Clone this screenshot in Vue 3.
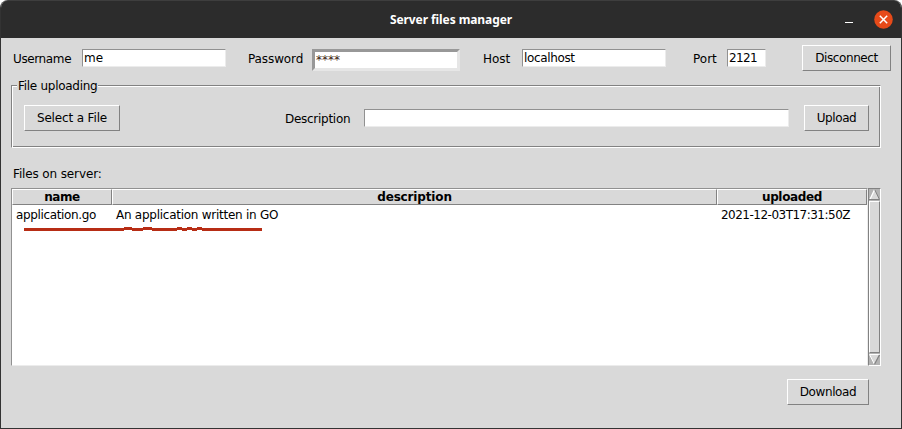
<script setup>
const columns = ['name', 'description', 'uploaded']
const rows = [
  { name: 'application.go', description: 'An application written in GO', uploaded: '2021-12-03T17:31:50Z' },
]
</script>

<template>
  <div class="window">
    <header class="titlebar">
      <span></span>
      <h1><span class="title">Server files manager</span></h1>
      <div class="controls">
        <span class="minimize"></span>
        <svg class="close" width="19" height="19" viewBox="0 0 19 19">
          <circle cx="9.5" cy="9.5" r="9.3" fill="#e64a19" />
          <path d="M5.8 5.8 L13.2 13.2 M13.2 5.8 L5.8 13.2" stroke="#fff" stroke-width="1.5" />
        </svg>
      </div>
    </header>

    <main class="content">
      <div class="connection">
        <label><span class="t-user">Username</span></label>
        <div class="entry"><span class="t-me">me</span></div>
        <label><span class="t-pass">Password</span></label>
        <div class="entry password"><span>****</span></div>
        <label><span class="t-host">Host</span></label>
        <div class="entry"><span class="t-local">localhost</span></div>
        <label><span class="t-port">Port</span></label>
        <div class="entry"><span class="t-num">2121</span></div>
        <div class="button"><span class="t-disc">Disconnect</span></div>
      </div>

      <section class="group">
        <div class="legend"><span class="t-legend">File uploading</span></div>
        <div class="upload">
          <div class="button"><span class="t-select">Select a File</span></div>
          <label><span class="t-desc">Description</span></label>
          <div class="entry"></div>
          <div class="button"><span class="t-upload">Upload</span></div>
        </div>
      </section>

      <div class="caption"><span class="t-files">Files on server:</span></div>

      <div class="listing">
        <div class="table">
          <div class="line head">
            <div v-for="c in columns" :key="c" class="th"><span :class="'h-' + c">{{ c }}</span></div>
          </div>
          <div v-for="r in rows" :key="r.name" class="line">
            <div v-for="c in columns" :key="c" class="td"><span :class="'d-' + c">{{ r[c] }}</span></div>
          </div>
          <svg class="marker" width="238" height="4" viewBox="0 0 238 4" shape-rendering="crispEdges">
            <path fill="#b72d15" d="M0 1H100V0H108V1H119V0H128V1H153V0H158V1H163V0H168V1H173V0H178V1H238V4H178V3H173V4H168V3H163V4H158V3H153V4H128V3H119V4H108V3H100V4H0Z" />
          </svg>
        </div>
        <div class="scrollbar">
          <svg width="11" height="12" viewBox="0 0 11 12">
            <path d="M5.5 .5 L10.5 11 H.5 Z" fill="#d9d9d9" />
            <path d="M.7 11 L5.5 .7" stroke="#fff" stroke-width="1.3" />
            <path d="M5.7 .7 L10.5 10.5 H0" fill="none" stroke="#828282" />
          </svg>
          <div class="thumb"></div>
          <svg width="11" height="12" viewBox="0 0 11 12">
            <path d="M.5 1.5 H10.5 L5.5 11 Z" fill="#d9d9d9" />
            <path d="M11 1.5 H.5 L5.3 11" fill="none" stroke="#fff" />
            <path d="M10.5 1.8 L5.5 11.3" stroke="#828282" stroke-width="1.2" />
          </svg>
        </div>
      </div>

      <footer><div class="button"><span class="t-down">Download</span></div></footer>
    </main>
  </div>
</template>

<style>
body { background: #fff; }
</style>

<style scoped>
* { box-sizing: border-box; }
.window {
  width: 902px; height: 429px; overflow: hidden;
  border: 1px solid #333; border-top: 0; border-radius: 8px 8px 0 0;
  background: #d9d9d9; color: #000;
  font: 12px/16px "DejaVu Sans", sans-serif; white-space: nowrap;
}
.titlebar {
  height: 38px; display: grid; grid-template-columns: 100px 1fr 100px; align-items: center;
  background: #2c2c2c; border-top: 1px solid #3e3e3e; border-radius: 7px 7px 0 0;
}
h1 { margin: 0; text-align: center; font: bold 12px/16px "Noto Sans", sans-serif; color: #fff; }
.title { letter-spacing: -0.08px; }
.controls { display: flex; justify-content: flex-end; align-items: center; gap: 20.5px; padding-right: 8.5px; }
.minimize { width: 8px; height: 1px; background: #fff; margin-top: 5px; }
.close { display: block; }
.content { padding: 7px 10px 0; }
.connection {
  display: grid; grid-template-columns: 71px 144px 86px 148px 62px 144px 61px 39px 125px;
  height: 26px; align-items: start;
}
.connection > .button { margin-left: 36px; }
label { display: block; }
.connection label { padding-top: 6px; }
.connection label:nth-child(1) { padding-left: 2px; }
.connection label:nth-child(3) { padding-left: 22px; }
.connection label:nth-child(5) { padding-left: 23px; }
.connection label:nth-child(7) { padding-left: 27px; }
.connection .entry { margin-top: 4px; }
.entry {
  height: 18px; border: 1px solid; border-color: #919191 #ececec #ececec #919191;
  background: #fff; padding-left: 1px; line-height: 16px;
}
.connection .password {
  height: 22px; border-width: 3px; border-color: #989898 #e6e6e6 #e6e6e6 #989898;
}
.password span { color: #3e1c0d; }
.button {
  height: 26px; border: 1px solid; border-color: #fff #828282 #828282 #fff;
  text-align: center; line-height: 24px;
}
.group {
  width: 870px; height: 63px; margin-top: 14px;
  border: 1px solid; border-color: #828282 #fff #fff #828282;
  box-shadow: inset 1px 1px #fff, inset -1px -1px #828282;
}
.legend { width: 81px; height: 16px; margin: -8px 0 0 5px; padding-left: 1px; background: #d9d9d9; }
.upload { display: grid; grid-template-columns: 96px 244px 425px 65px; padding: 11px 0 0 12px; }
.upload label { padding: 6px 0 0 165px; }
.upload .entry { margin-top: 4px; }
.upload .button:last-child { margin-left: 15px; width: 65px; }
.caption { margin: 18px 0 0 2px; height: 16px; }
.listing { display: flex; margin-top: 6px; height: 178px; }
.table {
  width: 857px; border: 1px solid; border-color: #919191 #ececec #ececec #919191; background: #fff;
}
.line { display: grid; grid-template-columns: 100px 605px 150px; }
.th {
  height: 16px; line-height: 14px; text-align: center; font-weight: bold; background: #d9d9d9;
  border: 1px solid; border-color: #fff #828282 #828282 #fff;
}
.td { height: 20px; line-height: 20px; padding-left: 4px; }
.marker { display: block; margin: 2px 0 0 12px; }
.scrollbar {
  width: 13px; height: 178px; background: #b3b3b3;
  border: 1px solid; border-color: #828282 #fff #fff #828282;
  display: flex; flex-direction: column;
}
.scrollbar svg { display: block; flex: none; }
.thumb { flex: 1; background: #d9d9d9; border: 1px solid; border-color: #fff #828282 #828282 #fff; }
footer { margin-top: 13px; padding-left: 776px; }
footer .button { width: 82px; }

/* per-label tracking */
.t-user { letter-spacing: -0.38px; }
.t-pass { letter-spacing: -0.1px; }
.t-local { letter-spacing: -0.36px; }
.t-num { letter-spacing: -0.64px; }
.t-disc { letter-spacing: -0.4px; }
.t-legend { letter-spacing: -0.28px; }
.t-select { letter-spacing: -0.15px; }
.t-desc { letter-spacing: -0.28px; }
.t-upload { letter-spacing: -0.4px; }
.t-files { letter-spacing: -0.13px; }
.t-down { letter-spacing: -0.4px; }
.h-name { letter-spacing: -0.4px; }
.h-description { letter-spacing: -0.15px; }
.h-uploaded { letter-spacing: -0.35px; }
.d-name { letter-spacing: -0.36px; }
.d-description { letter-spacing: -0.26px; }
.d-uploaded { letter-spacing: -0.51px; }
</style>
